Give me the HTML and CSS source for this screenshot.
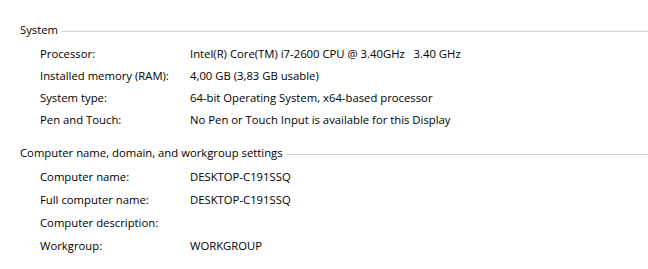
FILE: index.html
```html
<!DOCTYPE html>
<html lang="en">

<head>
    <meta charset="UTF-8">
    <title>System</title>
    <link rel="stylesheet" href="styles.css">
</head>

<body>
    <div class="panel">
        <section class="group">
            <h2 class="group-title"><span>System</span></h2>
            <div class="rows">
                <div class="row"><span class="label">Processor:</span><span class="value">Intel(R) Core(TM) i7-2600 CPU @ 3.40GHz&nbsp;&nbsp;&nbsp;3.40 GHz</span></div>
                <div class="row"><span class="label">Installed memory (RAM):</span><span class="value">4,00 GB (3,83 GB usable)</span></div>
                <div class="row"><span class="label">System type:</span><span class="value">64-bit Operating System, x64-based processor</span></div>
                <div class="row"><span class="label">Pen and Touch:</span><span class="value">No Pen or Touch Input is available for this Display</span></div>
            </div>
        </section>
        <section class="group">
            <h2 class="group-title"><span>Computer name, domain, and workgroup settings</span></h2>
            <div class="rows tall">
                <div class="row"><span class="label">Computer name:</span><span class="value">DESKTOP-C191SSQ</span></div>
                <div class="row"><span class="label">Full computer name:</span><span class="value">DESKTOP-C191SSQ</span></div>
                <div class="row"><span class="label">Computer description:</span><span class="value"></span></div>
                <div class="row"><span class="label">Workgroup:</span><span class="value">WORKGROUP</span></div>
            </div>
        </section>
    </div>
</body>

</html>
```

FILE: styles.css
```css
*,
::before,
::after {
    margin: 0;
    padding: 0;
    box-sizing: border-box;
}

body {
    font: 11.3px/22px "Open Sans", "Noto Sans", sans-serif;
    background: #fff;
    color: #000;
}

.panel {
    padding: 19px 0 0 20px;
}

.group + .group {
    margin-top: 11px;
}

.group-title {
    display: flex;
    align-items: center;
    font-size: 11.3px;
    font-weight: 400;
    line-height: 22px;
}

.group-title::after {
    content: "";
    flex: 1;
    height: 1px;
    margin-left: 3px;
    margin-top: 2px;
    background: #d4d4d4;
}

.rows {
    margin-top: 2px;
    padding-left: 20px;
}

.row {
    display: flex;
    height: 22px;
}

.rows.tall .row {
    height: 23px;
}

.label {
    width: 150px;
    flex: none;
}
```
